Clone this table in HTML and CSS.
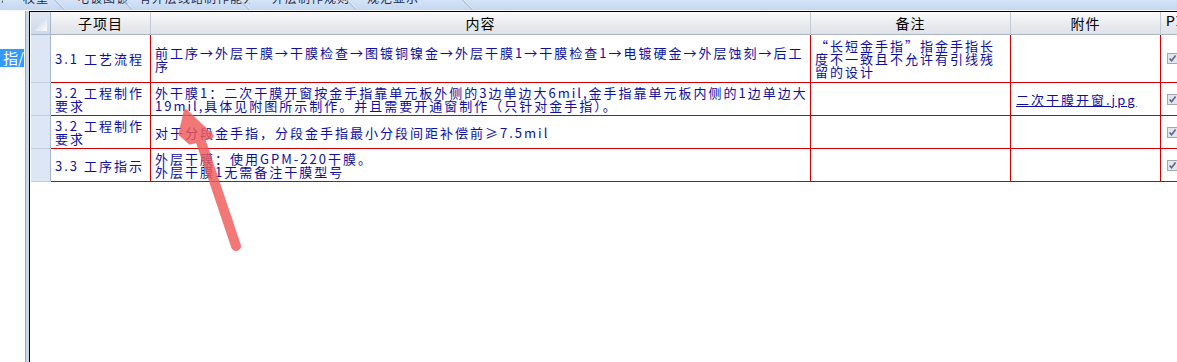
FILE: index.html
```html
<!DOCTYPE html>
<html lang="zh-CN">
<head>
<meta charset="utf-8">
<title>工程制作要求</title>
<link rel="stylesheet" href="styles.css">
</head>
<body>
<div class="tabs">
  <div class="tab tab0"><span>显示</span></div>
  <div class="tab tab1"><span>权重</span></div>
  <div class="tab tab2"><span>电镀图镀</span></div>
  <div class="tab tab3"><span>有外层线路制作能力</span></div>
  <div class="tab tab4"><span>外层制作规则</span></div>
  <div class="tab tab5"><span>规范显示</span></div>
</div>
<div class="main">
  <div class="side"><div class="sel">指/</div></div>
  <div class="splitter"></div>
  <div class="gridwrap">
    <div class="grid">
      <div class="corner">
        <svg width="19" height="22" viewBox="0 0 19 22">
          <defs>
            <linearGradient id="tri" x1="0" y1="0" x2="1" y2="1">
              <stop offset="0" stop-color="#b9cbe3"/>
              <stop offset="1" stop-color="#ffffff"/>
            </linearGradient>
          </defs>
          <polygon points="3,19 16,19 16,5" fill="url(#tri)"/>
        </svg>
      </div>
      <div class="hd">子项目</div>
      <div class="hd">内容</div>
      <div class="hd">备注</div>
      <div class="hd">附件</div>
      <div class="hd hd-p">PIC</div>

      <div class="rh"></div>
      <div class="cell">3.1 工艺流程</div>
      <div class="cell">前工序→外层干膜→干膜检查→图镀铜镍金→外层干膜1→干膜检查1→电镀硬金→外层蚀刻→后工<br>序</div>
      <div class="cell">“长短金手指”指金手指长<br>度不一致且不允许有引线残<br>留的设计</div>
      <div class="cell"></div>
      <div class="cell cell-p"><span class="chk"><svg width="11" height="11" viewBox="0 0 11 11"><rect x="0.5" y="0.5" width="10" height="10" fill="#e4e6ea" stroke="#a2a6ad"/><path d="M2.6 5.4 L4.6 7.8 L8.6 2.6" fill="none" stroke="#52679a" stroke-width="1.6"/></svg></span></div>

      <div class="rh"></div>
      <div class="cell">3.2 工程制作<br>要求</div>
      <div class="cell">外干膜1：二次干膜开窗按金手指靠单元板外侧的3边单边大6mil,金手指靠单元板内侧的1边单边大<br>19mil,具体见附图所示制作。并且需要开通窗制作（只针对金手指）。</div>
      <div class="cell"></div>
      <div class="cell"><a class="link" href="#">二次干膜开窗.jpg</a></div>
      <div class="cell cell-p"><span class="chk"><svg width="11" height="11" viewBox="0 0 11 11"><rect x="0.5" y="0.5" width="10" height="10" fill="#e4e6ea" stroke="#a2a6ad"/><path d="M2.6 5.4 L4.6 7.8 L8.6 2.6" fill="none" stroke="#52679a" stroke-width="1.6"/></svg></span></div>

      <div class="rh"></div>
      <div class="cell">3.2 工程制作<br>要求</div>
      <div class="cell">对于分段金手指，分段金手指最小分段间距补偿前≥7.5mil</div>
      <div class="cell"></div>
      <div class="cell"></div>
      <div class="cell cell-p"><span class="chk"><svg width="11" height="11" viewBox="0 0 11 11"><rect x="0.5" y="0.5" width="10" height="10" fill="#e4e6ea" stroke="#a2a6ad"/><path d="M2.6 5.4 L4.6 7.8 L8.6 2.6" fill="none" stroke="#52679a" stroke-width="1.6"/></svg></span></div>

      <div class="rh"></div>
      <div class="cell">3.3 工序指示</div>
      <div class="cell">外层干膜：使用GPM-220干膜。<br>外层干膜1无需备注干膜型号</div>
      <div class="cell"></div>
      <div class="cell"></div>
      <div class="cell cell-p"><span class="chk"><svg width="11" height="11" viewBox="0 0 11 11"><rect x="0.5" y="0.5" width="10" height="10" fill="#e4e6ea" stroke="#a2a6ad"/><path d="M2.6 5.4 L4.6 7.8 L8.6 2.6" fill="none" stroke="#52679a" stroke-width="1.6"/></svg></span></div>
    </div>
  </div>
</div>
<svg class="arrow" width="1177" height="362" viewBox="0 0 1177 362">
  <g opacity="0.82" fill="#f05a5a" stroke="#f05a5a" stroke-linejoin="round" stroke-linecap="round">
    <polygon points="186,112 181,134 190,142 211,136" stroke-width="5"/>
    <line x1="199" y1="136" x2="236" y2="246" stroke-width="10"/>
  </g>
</svg>
</body>
</html>
```

FILE: styles.css
```css
html, body {
  margin: 0;
  padding: 0;
}

body {
  width: 1177px;
  height: 362px;
  overflow: hidden;
  background: #ffffff;
  position: relative;
  font-family: "Noto Sans CJK SC", "Noto Sans", sans-serif;
}

/* top tab strip (cut off) */
.tabs {
  height: 10px;
  display: flex;
  background: linear-gradient(#d4e3f6, #c4d7f0);
  border-bottom: 1px solid #f4f8fd;
  overflow: hidden;
}

.tab {
  position: relative;
  height: 10px;
  overflow: hidden;
  font-size: 12px;
  letter-spacing: 1px;
  color: #1d2b4e;
  white-space: nowrap;
  box-sizing: border-box;
}

.tab span {
  display: block;
  line-height: 13px;
  margin-top: -9px;
}

.tab::after {
  content: "";
  position: absolute;
  right: 5px;
  top: -2px;
  width: 1px;
  height: 14px;
  background: #97aed0;
  box-shadow: 1px 0 0 #eef4fc;
  transform: skewX(45deg);
}

.tab0 { width: 15px; margin-left: -12px; padding-left: 0; }
.tab0::after { display: none; }
.tab1 { width: 62px; padding-left: 20px; }
.tab2 { width: 68px; padding-left: 12px; }
.tab3 { width: 117px; padding-left: 6px; }
.tab4 { width: 107px; padding-left: 22px; }
.tab5 { width: 116px; padding-left: 10px; }

/* main area */
.main {
  display: flex;
  height: 351px;
}

.side {
  width: 25px;
  border-right: 1px solid #9aa9bf;
  padding-top: 38px;
  box-sizing: content-box;
}

.sel {
  width: 24px;
  height: 18px;
  background: #3399ff;
  color: #ffffff;
  font-size: 15px;
  line-height: 18px;
  padding-left: 3px;
  box-sizing: border-box;
  overflow: hidden;
  white-space: nowrap;
}

.splitter {
  width: 3px;
  background: #cad7e9;
}

.gridwrap {
  flex: 1;
  border-left: 1px solid #000000;
  border-top: 1px solid #000000;
  padding-left: 1px;
  overflow: hidden;
}

.grid {
  display: grid;
  grid-template-columns: 20px 100px 660px 200px 150px 60px;
  grid-template-rows: 23px 48px 33px 33px 33px;
}

.grid > div {
  box-sizing: border-box;
}

.corner {
  background: linear-gradient(#dfe7f2, #cdd9ea);
  border-right: 1px solid #a9b7cb;
  border-bottom: 1px solid #a9b7cb;
}

.corner svg {
  display: block;
}

.hd {
  background: linear-gradient(#fbfbfc, #e9ebee 55%, #dfe2e7);
  border-right: 1px solid #c3c9d2;
  border-bottom: 1px solid #aab4c3;
  font-size: 14px;
  letter-spacing: 1px;
  line-height: 22px;
  color: #000000;
  text-align: center;
  white-space: nowrap;
  overflow: hidden;
}

.hd-p {
  text-align: left;
  padding-left: 5px;
  font-family: "Liberation Mono", monospace;
  font-size: 15px;
  letter-spacing: 0;
  border-right: none;
}

.rh {
  background: #dce6f4;
  border-right: 1px solid #a9b7cb;
  border-bottom: 1px solid #c4d0e1;
}

.cell {
  border-right: 1px solid #d40000;
  border-bottom: 1px solid #d40000;
  padding: 0 3px 0 4px;
  display: flex;
  align-items: center;
  font-size: 13px;
  letter-spacing: 2px;
  line-height: 13px;
  color: #0e0ea2;
  white-space: nowrap;
  overflow: hidden;
}

.cell-p {
  border-right: none;
  padding-left: 6px;
}

.chk {
  display: block;
  width: 11px;
  height: 11px;
}

.chk svg {
  display: block;
}

.link {
  color: #0e0ea2;
  text-decoration: underline;
  padding-left: 1px;
}

/* annotation arrow drawn over the screenshot */
.arrow {
  position: absolute;
  left: 0;
  top: 0;
  pointer-events: none;
}
```
